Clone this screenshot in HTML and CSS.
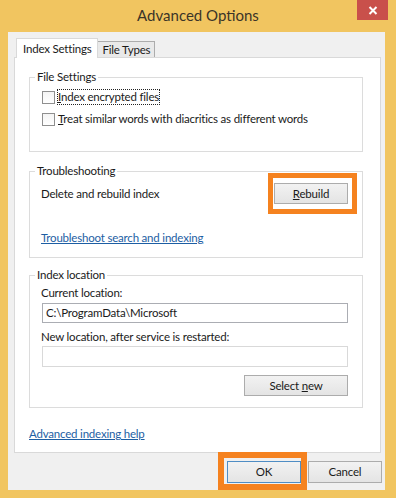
FILE: index.html
```html
<!DOCTYPE html>
<html lang="en">
<head>
    <meta charset="UTF-8">
    <meta name="viewport" content="width=device-width, initial-scale=1.0">
    <title>Advanced Options</title>
    <link rel="stylesheet" href="styles.css">
</head>
<body>

    <div class="window">
        <div class="titlebar">
            <span></span>
            <h1 class="title">Advanced Options</h1>
            <button class="close" title="Close">
                <svg width="10" height="9" viewBox="0 0 10 9">
                    <path d="M1.5 1 L8.5 8 M8.5 1 L1.5 8" stroke="#fff" stroke-width="2" fill="none"/>
                </svg>
            </button>
        </div>

        <div class="client">
            <div class="tabs">
                <div class="tab active">Index Settings</div>
                <div class="tab">File Types</div>
            </div>

            <div class="panel">
                <!-- File settings -->
                <fieldset class="group group-files">
                    <legend>File Settings</legend>
                    <label class="check">
                        <span class="box"></span>
                        <span class="focus"><u>I</u>ndex encrypted files</span>
                    </label>
                    <label class="check">
                        <span class="box"></span>
                        <span class="check-text"><u>T</u>reat similar words with diacritics as different words</span>
                    </label>
                </fieldset>

                <!-- Troubleshooting -->
                <fieldset class="group group-trouble">
                    <legend>Troubleshooting</legend>
                    <div class="row">
                        <span>Delete and rebuild index</span>
                        <button class="btn mark mark-rebuild"><u>R</u>ebuild</button>
                    </div>
                    <a class="link link-trouble" href="#">Troubleshoot search and indexing</a>
                </fieldset>

                <!-- Index location -->
                <fieldset class="group group-location">
                    <legend>Index location</legend>
                    <div class="field-label">Current location:</div>
                    <div class="field">C:\ProgramData\Microsoft</div>
                    <div class="field-label second">New location, after service is restarted:</div>
                    <div class="field disabled"></div>
                    <div class="actions">
                        <button class="btn wide">Select <u>n</u>ew</button>
                    </div>
                </fieldset>

                <a class="link link-help" href="#">Advanced indexing help</a>
            </div>

            <div class="footer">
                <button class="btn default mark mark-ok">OK</button>
                <button class="btn">Cancel</button>
            </div>
        </div>
    </div>

</body>
</html>
```

FILE: styles.css
```css
* {
    box-sizing: border-box;
}
body {
    margin: 0;
    width: 396px;
    height: 498px;
    overflow: hidden;
    background-color: #f1c560;
    font-family: Lato, 'Open Sans', sans-serif;
    font-size: 11.5px;
    letter-spacing: -0.2px;
    color: #1a1a1a;
}
.window {
    height: 498px;
    display: flex;
    flex-direction: column;
}
.titlebar {
    height: 32px;
    display: grid;
    grid-template-columns: 1fr auto 1fr;
    align-items: start;
}
.title {
    margin: 0;
    font-size: 15px;
    font-weight: normal;
    letter-spacing: 0;
    line-height: 30px;
    color: #3b3428;
}
.close {
    justify-self: end;
    width: 31px;
    height: 20px;
    margin-right: 8px;
    padding: 0;
    border: none;
    background-color: #c9504b;
    display: flex;
    align-items: center;
    justify-content: center;
}
.client {
    margin: 0 11px 0 8px;
    height: 458px;
    padding: 6px 3px 7px 6px;
    background-color: #f0f0f0;
    display: flex;
    flex-direction: column;
}
.tabs {
    display: flex;
    align-items: flex-end;
    height: 19px;
    padding-left: 2px;
    position: relative;
    z-index: 1;
}
.tab {
    height: 16px;
    padding: 0 4px;
    line-height: 15px;
    border: 1px solid #acacac;
    border-bottom: none;
    background-color: #e9e9e9;
}
.tab.active {
    height: 20px;
    margin-bottom: -1px;
    padding: 0 6px;
    line-height: 19px;
    border-color: #d9d9d9;
    background-color: #fff;
    position: relative;
    z-index: 2;
}
.tab.active + .tab {
    margin-left: -1px;
}
.panel {
    width: 367px;
    height: 396px;
    border: 1px solid #d9d9d9;
    background-color: #fff;
    padding: 11px 17px 0 14px;
}
.group {
    margin: 0;
    padding: 0 14px 0 11px;
    border: 1px solid #dcdcdc;
    min-width: 0;
}
.group legend {
    margin-left: -6px;
    padding: 0 2px;
    line-height: 16px;
}
.group-files {
    padding-top: 4px;
    padding-bottom: 24px;
}
.group-trouble {
    margin-top: 11px;
    padding-top: 4px;
    padding-bottom: 11px;
}
.group-location {
    margin-top: 9px;
    padding-top: 2px;
    padding-bottom: 11px;
}
.check {
    display: flex;
    align-items: center;
    height: 16px;
    line-height: 16px;
    margin-left: 1px;
}
.check + .check {
    margin-top: 6px;
}
.box {
    width: 13px;
    height: 13px;
    border: 1px solid #8f8f8f;
    background: linear-gradient(#f4f4f4, #fff);
    margin-right: 2px;
    flex: none;
}
.focus,
.check-text {
    padding: 0 1px;
    white-space: nowrap;
}
.focus {
    outline: 1px dotted #222;
    outline-offset: -1px;
}
.row {
    display: flex;
    align-items: center;
    justify-content: space-between;
    height: 21px;
}
.btn {
    font-family: inherit;
    font-size: 11.5px;
    letter-spacing: -0.2px;
    color: #1a1a1a;
    width: 74px;
    height: 21px;
    padding: 0;
    border: 1px solid #acacac;
    background: linear-gradient(#f2f2f2, #e4e4e4);
    line-height: 18px;
}
.btn.wide {
    width: 104px;
}
.btn.default {
    border-color: #4f8dc4;
    height: 22px;
}
.mark {
    position: relative;
}
.mark::after {
    content: "";
    position: absolute;
    border: 5px solid #f5821f;
}
.mark-rebuild::after {
    top: -11px;
    left: -7px;
    right: -10px;
    bottom: -11px;
}
.mark-ok::after {
    top: -10px;
    left: -10px;
    right: -7px;
    bottom: -8px;
    border-width: 6px;
}
.link {
    display: block;
    width: max-content;
    line-height: 16px;
    color: #1d5ea3;
    text-decoration: underline;
}
.link-trouble {
    margin-top: 26px;
}
.link-help {
    margin-top: 18px;
}
.field-label {
    line-height: 16px;
}
.field-label.second {
    margin-top: 6px;
}
.field {
    margin: 2px 0 0 1px;
    height: 20px;
    border: 1px solid #abadb3;
    background-color: #fff;
    padding-left: 3px;
    line-height: 18px;
}
.field.disabled {
    margin-top: 1px;
    height: 21px;
    border-color: #d9d9d9;
}
.actions {
    margin-top: 8px;
    display: flex;
    justify-content: flex-end;
}
.footer {
    margin-top: 8px;
    display: flex;
    justify-content: flex-end;
    gap: 7px;
}
.footer .btn {
    height: 22px;
}
```
